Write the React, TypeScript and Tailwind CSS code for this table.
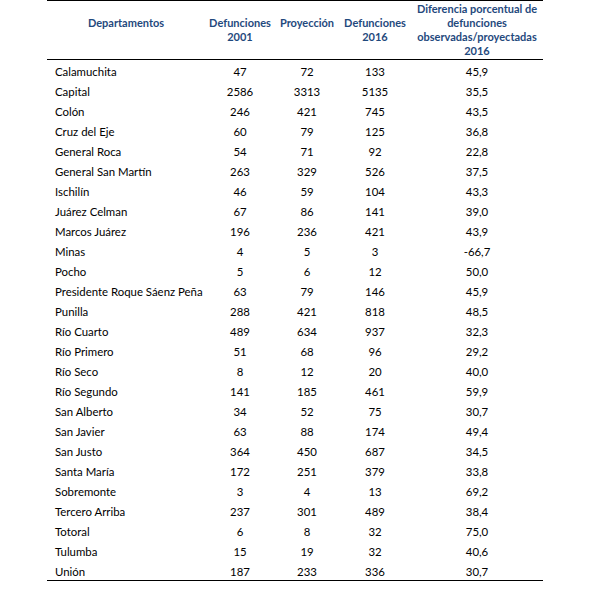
import React from 'react';

type Row = [string, number, number, number, string];

const rows: Row[] = [
  ['Calamuchita', 47, 72, 133, '45,9'],
  ['Capital', 2586, 3313, 5135, '35,5'],
  ['Colón', 246, 421, 745, '43,5'],
  ['Cruz del Eje', 60, 79, 125, '36,8'],
  ['General Roca', 54, 71, 92, '22,8'],
  ['General San Martín', 263, 329, 526, '37,5'],
  ['Ischilín', 46, 59, 104, '43,3'],
  ['Juárez Celman', 67, 86, 141, '39,0'],
  ['Marcos Juárez', 196, 236, 421, '43,9'],
  ['Minas', 4, 5, 3, '-66,7'],
  ['Pocho', 5, 6, 12, '50,0'],
  ['Presidente Roque Sáenz Peña', 63, 79, 146, '45,9'],
  ['Punilla', 288, 421, 818, '48,5'],
  ['Río Cuarto', 489, 634, 937, '32,3'],
  ['Río Primero', 51, 68, 96, '29,2'],
  ['Río Seco', 8, 12, 20, '40,0'],
  ['Río Segundo', 141, 185, 461, '59,9'],
  ['San Alberto', 34, 52, 75, '30,7'],
  ['San Javier', 63, 88, 174, '49,4'],
  ['San Justo', 364, 450, 687, '34,5'],
  ['Santa María', 172, 251, 379, '33,8'],
  ['Sobremonte', 3, 4, 13, '69,2'],
  ['Tercero Arriba', 237, 301, 489, '38,4'],
  ['Totoral', 6, 8, 32, '75,0'],
  ['Tulumba', 15, 19, 32, '40,6'],
  ['Unión', 187, 233, 336, '30,7'],
];

const cols = 'grid grid-cols-[158px_70px_64px_72px_132px]';

const App: React.FC = () => {
  return (
    <div className="w-[590px] h-[597px] bg-white text-black text-[11px] font-['Lato','Open_Sans',sans-serif]">
      <div className="ml-[47px] w-[496px]">
        {/* header */}
        <div className={`${cols} h-[60px] border-t border-b border-black text-[#1f497d] font-bold leading-[14px] text-center`}>
          <div className="flex items-center justify-center pb-[14px]">Departamentos</div>
          <div className="flex items-center justify-center">
            Defunciones
            <br />
            2001
          </div>
          <div className="flex items-center justify-center pb-[14px]">Proyección</div>
          <div className="flex items-center justify-center">
            Defunciones
            <br />
            2016
          </div>
          <div className="flex items-center justify-center">
            Diferencia porcentual de
            <br />
            defunciones
            <br />
            observadas/proyectadas
            <br />
            2016
          </div>
        </div>

        {/* body */}
        <div className="border-b border-black text-[11.4px]">
          {rows.map(([name, d2001, proy, d2016, diff]) => (
            <div key={name} className={`${cols} h-[20px] leading-[14px]`}>
              <div className="flex items-end pb-[1px] pl-[8px]">{name}</div>
              <div className="flex items-end justify-center pb-[1px]">{d2001}</div>
              <div className="flex items-end justify-center pb-[1px]">{proy}</div>
              <div className="flex items-end justify-center pb-[1px]">{d2016}</div>
              <div className="flex items-end justify-center pb-[1px]">{diff}</div>
            </div>
          ))}
        </div>
      </div>
    </div>
  );
};

export default App;
